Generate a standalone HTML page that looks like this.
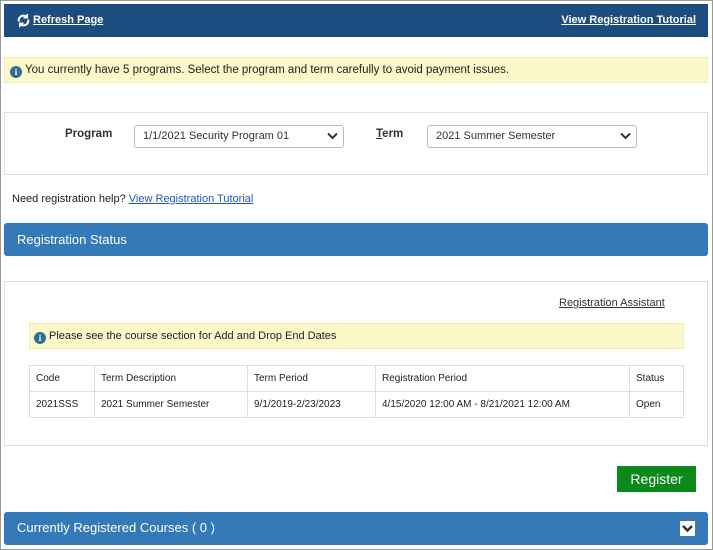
<!DOCTYPE html><html><head><style>
*{box-sizing:border-box;margin:0;padding:0}
body{width:713px;height:550px;background:#fff;font-family:"Liberation Sans",sans-serif;font-size:11px;color:#222;position:relative;overflow:hidden}
.frame{position:absolute;left:0;top:0;width:713px;height:550px;border:1px solid #999;pointer-events:none}
.a{position:absolute}
u{text-decoration:underline}
.ic{display:inline-block;width:12px;height:12px;border-radius:50%;background:#2f6f94;color:#fff;font:bold 9px "Liberation Serif",serif;text-align:center;line-height:12px;vertical-align:-2px;margin-right:3px}
.sel{border:1px solid #bbb;border-radius:3px;height:23px;padding:4px 8px;font-size:11px;color:#333;background:#fff}
.chev{position:absolute;right:5px;top:6px}
table{border-collapse:collapse;font-size:10px}
td{border:1px solid #ddd;padding:0 6px;height:26px}
</style></head><body>
<div class="a" style="left:4px;top:4px;width:704px;height:33px;background:#1b4e7f;color:#fff;font-weight:bold;font-size:11px">
<svg class="a" style="left:12px;top:9px" width="15" height="15" viewBox="0 0 16 16" fill="none" stroke="#fff" stroke-width="2.2"><path d="M3 9a5 5 0 0 1 9-4"/><path d="M13 7a5 5 0 0 1-9 4"/><path d="M12 1v4H8" stroke-width="1.8"/><path d="M4 15v-4h4" stroke-width="1.8"/></svg>
<u class="a" style="left:29px;top:10px">Refresh Page</u>
<u class="a" style="right:12px;top:10px">View Registration Tutorial</u></div>
<div class="a" style="left:4px;top:57px;width:704px;height:26px;background:#fcf8c9;border:1px solid #f2ecb0;padding:6px 5px;font-size:11.5px"><span class="ic">i</span>You currently have 5 programs. Select the program and term carefully to avoid payment issues.</div>
<div class="a" style="left:4px;top:112px;width:704px;height:63px;border:1px solid #ddd">
<b class="a" style="left:60px;top:15px;font-size:11.5px;color:#333">Program</b>
<div class="a sel" style="left:129px;top:12px;width:210px">1/1/2021 Security Program 01<svg class="chev" width="11" height="8" viewBox="0 0 11 8"><path d="M1 1.5l4.5 4.5 4.5-4.5" stroke="#333" stroke-width="2" fill="none"/></svg></div>
<b class="a" style="left:371px;top:15px;font-size:11.5px;color:#333"><u>T</u>erm</b>
<div class="a sel" style="left:422px;top:12px;width:210px">2021 Summer Semester<svg class="chev" width="11" height="8" viewBox="0 0 11 8"><path d="M1 1.5l4.5 4.5 4.5-4.5" stroke="#333" stroke-width="2" fill="none"/></svg></div></div>
<div class="a" style="left:12px;top:193px">Need registration help? <u style="color:#2255cc">View Registration Tutorial</u></div>
<div class="a" style="left:4px;top:223px;width:704px;height:33px;background:#337ab7;border-radius:3px;color:#fff;font-size:13px;padding:9px 13px">Registration Status</div>
<div class="a" style="left:4px;top:281px;width:704px;height:165px;border:1px solid #ddd">
<u class="a" style="left:554px;top:15px;color:#333">Registration Assistant</u>
<div class="a" style="left:24px;top:41px;width:655px;height:26px;background:#fcf8c9;border:1px solid #f2ecb0;padding:6px 4px"><span class="ic">i</span>Please see the course section for Add and Drop End Dates</div>
<table class="a" style="left:24px;top:83px;width:655px"><tr><td style="width:65px">Code</td><td style="width:153px">Term Description</td><td style="width:128px">Term Period</td><td>Registration Period</td><td style="width:54px">Status</td></tr>
<tr><td>2021SSS</td><td>2021 Summer Semester</td><td>9/1/2019-2/23/2023</td><td>4/15/2020 12:00 AM - 8/21/2021 12:00 AM</td><td>Open</td></tr></table></div>
<div class="a" style="left:617px;top:466px;width:79px;height:26px;background:#0b8a1b;color:#fff;font-size:14px;text-align:center;line-height:26px">Register</div>
<div class="a" style="left:4px;top:512px;width:704px;height:33px;background:#337ab7;border-radius:3px;color:#fff;font-size:13px;padding:8px 13px">Currently Registered Courses ( 0 )
<span class="a" style="right:13px;top:9px;width:15px;height:15px;background:#fff"><svg width="15" height="15" viewBox="0 0 15 15"><path d="M3 5l4.5 4.5L12 5" stroke="#333" stroke-width="2.5" fill="none"/></svg></span></div>
<div class="frame"></div>
</body></html>
